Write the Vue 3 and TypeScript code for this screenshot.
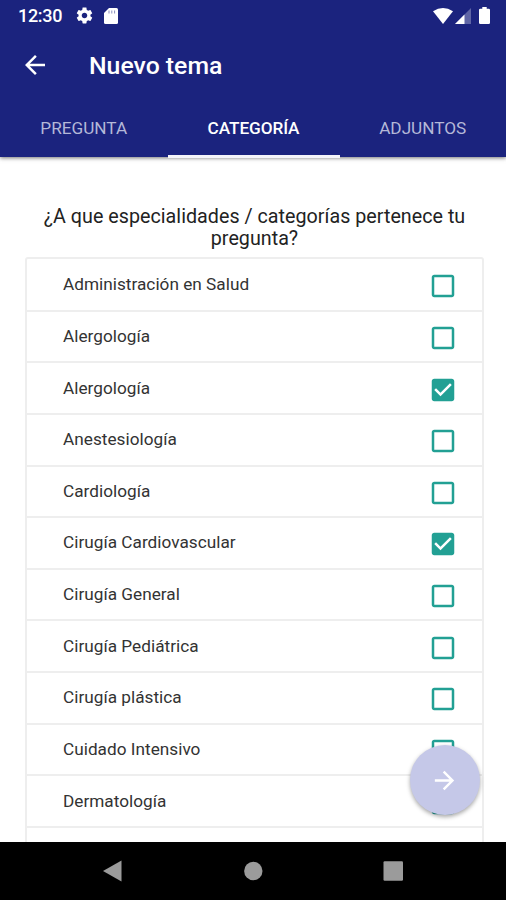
<script setup lang="ts">
import { ref } from 'vue'

interface Category {
  name: string
  checked: boolean
}

const tabs = ['PREGUNTA', 'CATEGORÍA', 'ADJUNTOS']
const activeTab = ref(1)

const categories = ref<Category[]>([
  { name: 'Administración en Salud', checked: false },
  { name: 'Alergología', checked: false },
  { name: 'Alergología', checked: true },
  { name: 'Anestesiología', checked: false },
  { name: 'Cardiología', checked: false },
  { name: 'Cirugía Cardiovascular', checked: true },
  { name: 'Cirugía General', checked: false },
  { name: 'Cirugía Pediátrica', checked: false },
  { name: 'Cirugía plástica', checked: false },
  { name: 'Cuidado Intensivo', checked: false },
  { name: 'Dermatología', checked: false },
  { name: '', checked: false },
])
</script>

<template>
  <div class="screen">
    <header class="top">
      <div class="status">
        <span class="clock">12:30</span>
        <svg class="gear" viewBox="0 0 24 24"><path d="M19.43 12.98c.04-.32.07-.64.07-.98s-.03-.66-.07-.98l2.11-1.65c.19-.15.24-.42.12-.64l-2-3.46c-.12-.22-.39-.3-.61-.22l-2.49 1c-.52-.4-1.08-.73-1.69-.98l-.38-2.65C14.46 2.18 14.25 2 14 2h-4c-.25 0-.46.18-.49.42l-.38 2.65c-.61.25-1.17.59-1.69.98l-2.49-1c-.23-.09-.49 0-.61.22l-2 3.46c-.13.22-.07.49.12.64l2.11 1.65c-.04.32-.07.65-.07.98s.03.66.07.98l-2.11 1.65c-.19.15-.24.42-.12.64l2 3.46c.12.22.39.3.61.22l2.49-1c.52.4 1.08.73 1.69.98l.38 2.65c.03.24.24.42.49.42h4c.25 0 .46-.18.49-.42l.38-2.65c.61-.25 1.17-.59 1.69-.98l2.49 1c.23.09.49 0 .61-.22l2-3.46c.12-.22.07-.49-.12-.64l-2.11-1.65zM12 15.500c-1.930 0-3.500-1.570-3.500-3.500s1.570-3.500 3.500-3.500 3.500 1.570 3.500 3.500-1.570 3.500-3.500 3.500z" /></svg>
        <svg class="card" viewBox="0 0 14 16"><path d="M5 0h7.500Q14 0 14 1.500v13Q14 16 12.500 16h-11Q0 16 0 14.500V5z" /><path class="slots" d="M5 2.500v3M7.800 2.500v3M10.600 2.500v3" /></svg>
        <span class="spacer"></span>
        <svg class="wifi" viewBox="0 0 20 16"><path d="M0 3.200Q10-3.200 20 3.200L10 16z" /></svg>
        <svg class="signal" viewBox="0 0 16 16"><path class="dim" d="M16 0v16H0z" /><path d="M9.500 6.500V16H0z" /></svg>
        <svg class="battery" viewBox="0 0 11 17"><path d="M3.300 0h4.400v1.700h2Q11 1.700 11 3v12.700Q11 17 9.700 17H1.300Q0 17 0 15.700V3Q0 1.700 1.300 1.700h2z" /></svg>
      </div>
      <div class="toolbar">
        <svg class="back" viewBox="0 0 24 24"><path d="M20 11H7.830l5.590-5.590L12 4l-8 8 8 8 1.410-1.410L7.830 13H20v-2z" /></svg>
        <h1>Nuevo tema</h1>
      </div>
      <nav class="tabs">
        <button
          v-for="(tab, i) in tabs"
          :key="tab"
          class="tab"
          :class="{ active: i === activeTab }"
          @click="activeTab = i"
        >{{ tab }}</button>
      </nav>
    </header>

    <main class="content">
      <p class="question">¿A que especialidades / categorías pertenece tu pregunta?</p>
      <ul class="list">
        <li v-for="(category, i) in categories" :key="i" class="row" @click="category.checked = !category.checked">
          <span class="name">{{ category.name }}</span>
          <svg class="check" viewBox="0 0 24 24">
            <path v-if="category.checked" d="M19 3H5c-1.110 0-2 .9-2 2v14c0 1.100.89 2 2 2h14c1.110 0 2-.9 2-2V5c0-1.100-.89-2-2-2zm-9 14l-5-5 1.410-1.410L10 14.170l7.590-7.590L19 8l-9 9z" />
            <path v-else d="M19 5v14H5V5h14m0-2H5c-1.100 0-2 .9-2 2v14c0 1.100.9 2 2 2h14c1.100 0 2-.9 2-2V5c0-1.100-.9-2-2-2z" />
          </svg>
        </li>
      </ul>
      <button class="fab" aria-label="Siguiente">
        <svg viewBox="0 0 24 24"><path d="M12 4l-1.410 1.410L16.170 11H4v2h12.170l-5.580 5.590L12 20l8-8z" /></svg>
      </button>
    </main>

    <footer class="navbar">
      <svg viewBox="0 0 24 24"><path d="M20.500 1.500v21L2 12z" /></svg>
      <svg viewBox="0 0 24 24"><circle cx="12.300" cy="12" r="9.200" /></svg>
      <svg viewBox="0 0 24 24"><rect x="2.500" y="2.200" width="19.500" height="19.500" rx="1.200" /></svg>
    </footer>
  </div>
</template>

<style>
body {
  margin: 0;
}
</style>

<style scoped>
.screen {
  display: flex;
  flex-direction: column;
  height: 100vh;
  overflow: hidden;
  background: #fff;
  font-family: Roboto, sans-serif;
}
svg {
  display: block;
  flex: none;
  fill: #fff;
}
button {
  border: 0;
  padding: 0;
  font-family: inherit;
}
.top {
  flex: none;
  position: relative;
  z-index: 1;
  height: 157px;
  display: flex;
  flex-direction: column;
  background: #1b237e;
  color: #fff;
  box-shadow: 0 1px 4px rgba(0, 0, 0, 0.55);
}
.status {
  display: flex;
  align-items: center;
  height: 31px;
  padding: 0 16px 0 18px;
}
.clock {
  width: 57px;
  font-size: 18px;
  font-weight: 500;
  line-height: 31px;
  letter-spacing: -0.3px;
}
.gear {
  width: 19px;
  height: 19px;
}
.card {
  width: 14px;
  height: 16px;
  margin-left: 10px;
}
.slots {
  stroke: #1b237e;
  stroke-width: 1;
  opacity: 0.5;
}
.spacer {
  flex: 1;
}
.wifi {
  width: 20px;
  height: 16px;
  margin-right: 2px;
}
.signal {
  width: 16px;
  height: 16px;
  margin-right: 8px;
}
.dim {
  opacity: 0.3;
}
.battery {
  width: 11px;
  height: 17px;
}
.toolbar {
  display: flex;
  align-items: center;
  height: 68px;
  padding-left: 20px;
}
.back {
  width: 30px;
  height: 30px;
}
h1 {
  margin: 2px 0 0 39px;
  font-size: 24.800px;
  font-weight: 500;
  line-height: 30px;
}
.tabs {
  display: grid;
  grid-template-columns: 167.500px 172px 1fr;
  flex: 1;
}
.tab {
  padding-top: 2px;
  border-bottom: 3px solid transparent;
  background: none;
  color: #b4b8d8;
  font-size: 17.200px;
}
.tab.active {
  margin-bottom: -1px;
  padding-top: 1px;
  border-bottom-color: #f4f4fa;
  color: #fff;
  font-weight: 500;
  letter-spacing: -0.080px;
}
.content {
  position: relative;
  flex: 1;
  min-height: 0;
  overflow: hidden;
  padding: 49px 22px 0 25px;
}
.question {
  margin: 0 0 7px;
  padding: 0 10px;
  color: #222;
  font-size: 19.700px;
  line-height: 22px;
  letter-spacing: 0.020px;
  text-align: center;
}
.list {
  margin: 0;
  padding: 1px 0 0;
  list-style: none;
  border: 2px solid #eee;
  border-radius: 3px;
}
.row {
  display: flex;
  align-items: center;
  justify-content: space-between;
  box-sizing: border-box;
  height: 51.640px;
  padding: 0 24.500px 0 36px;
  border-bottom: 2px solid #eee;
}
.name {
  padding-bottom: 1px;
  color: #333;
  font-size: 17.200px;
  line-height: 24px;
  letter-spacing: 0.020px;
}
.check {
  width: 30px;
  height: 30px;
  margin-top: 3px;
  fill: #22a094;
}
.fab {
  position: absolute;
  right: 26px;
  bottom: 27px;
  display: flex;
  align-items: center;
  justify-content: center;
  width: 70px;
  height: 70px;
  border-radius: 50%;
  background: #c5c8e8;
  box-shadow: 0 2px 4px rgba(0, 0, 0, 0.35);
}
.fab svg {
  width: 29px;
  height: 29px;
  margin-right: 1px;
}
.navbar {
  flex: none;
  display: flex;
  align-items: center;
  justify-content: center;
  gap: 116px;
  height: 58px;
  background: #000;
}
.navbar svg {
  width: 24px;
  height: 24px;
  fill: #9b9b9b;
}
</style>
